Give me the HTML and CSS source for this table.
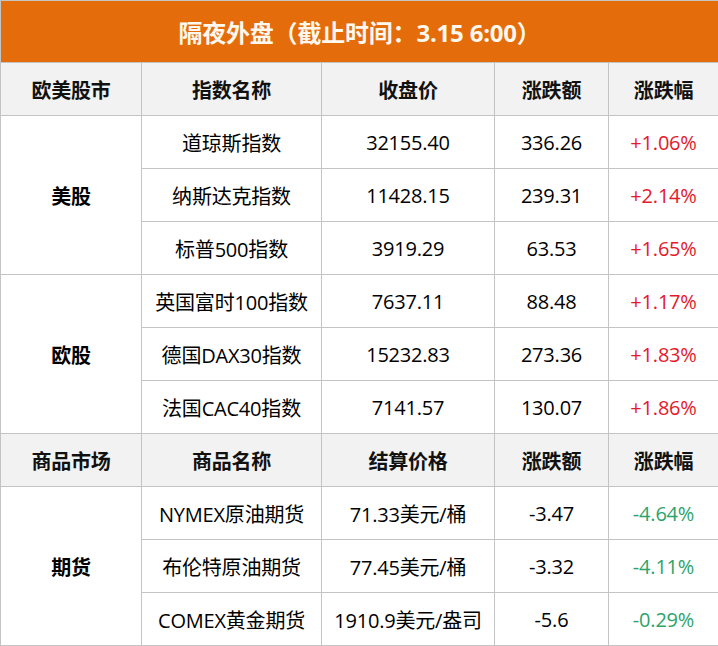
FILE: index.html
```html
<!DOCTYPE html>
<html lang="zh-CN">
<head>
<meta charset="utf-8">
<title>隔夜外盘</title>
<link rel="stylesheet" href="styles.css">
</head>
<body>
<table class="market">
  <colgroup>
    <col class="c1"><col class="c2"><col class="c3"><col class="c4"><col class="c5">
  </colgroup>
  <tr class="title-row"><td colspan="5" class="title">隔夜外盘（截止时间：3.15 6:00）</td></tr>
  <tr class="head"><td>欧美股市</td><td>指数名称</td><td>收盘价</td><td>涨跌额</td><td>涨跌幅</td></tr>
  <tr><td rowspan="3" class="group">美股</td><td>道琼斯指数</td><td>32155.40</td><td>336.26</td><td class="up">+1.06%</td></tr>
  <tr><td>纳斯达克指数</td><td>11428.15</td><td>239.31</td><td class="up">+2.14%</td></tr>
  <tr><td>标普500指数</td><td>3919.29</td><td>63.53</td><td class="up">+1.65%</td></tr>
  <tr><td rowspan="3" class="group">欧股</td><td>英国富时100指数</td><td>7637.11</td><td>88.48</td><td class="up">+1.17%</td></tr>
  <tr><td>德国DAX30指数</td><td>15232.83</td><td>273.36</td><td class="up">+1.83%</td></tr>
  <tr><td>法国CAC40指数</td><td>7141.57</td><td>130.07</td><td class="up">+1.86%</td></tr>
  <tr class="head"><td>商品市场</td><td>商品名称</td><td>结算价格</td><td>涨跌额</td><td>涨跌幅</td></tr>
  <tr><td rowspan="3" class="group">期货</td><td>NYMEX原油期货</td><td>71.33美元/桶</td><td>-3.47</td><td class="down">-4.64%</td></tr>
  <tr><td>布伦特原油期货</td><td>77.45美元/桶</td><td>-3.32</td><td class="down">-4.11%</td></tr>
  <tr><td>COMEX黄金期货</td><td>1910.9美元/盎司</td><td>-5.6</td><td class="down">-0.29%</td></tr>
</table>
</body>
</html>
```

FILE: styles.css
```css
html, body {
  margin: 0;
  padding: 0;
  background: #ffffff;
}

body {
  font-family: "Open Sans", "Noto Sans CJK SC", sans-serif;
  color: #000000;
}

.market {
  width: 718px;
  border-collapse: collapse;
  table-layout: fixed;
}

.c1 { width: 141px; }
.c2 { width: 180px; }
.c3 { width: 173px; }
.c4 { width: 114px; }
.c5 { width: 110px; }

.market td {
  border: 1px solid #c4c4c4;
  text-align: center;
  vertical-align: middle;
  font-size: 20px;
  height: 52px;
  padding: 0;
  white-space: nowrap;
  letter-spacing: -0.2px;
}

.market .title-row td {
  height: 61px;
}

.title {
  background: #e46c0a;
  color: #fff8ee;
  font-weight: bold;
  font-size: 24px !important;
  letter-spacing: 0;
}

.head td {
  background: #f2f2f2;
  font-weight: bold;
  color: #111111;
}

.market .group {
  font-weight: bold;
}

.up {
  color: #e4192b;
}

.down {
  color: #2ea36a;
}
```
